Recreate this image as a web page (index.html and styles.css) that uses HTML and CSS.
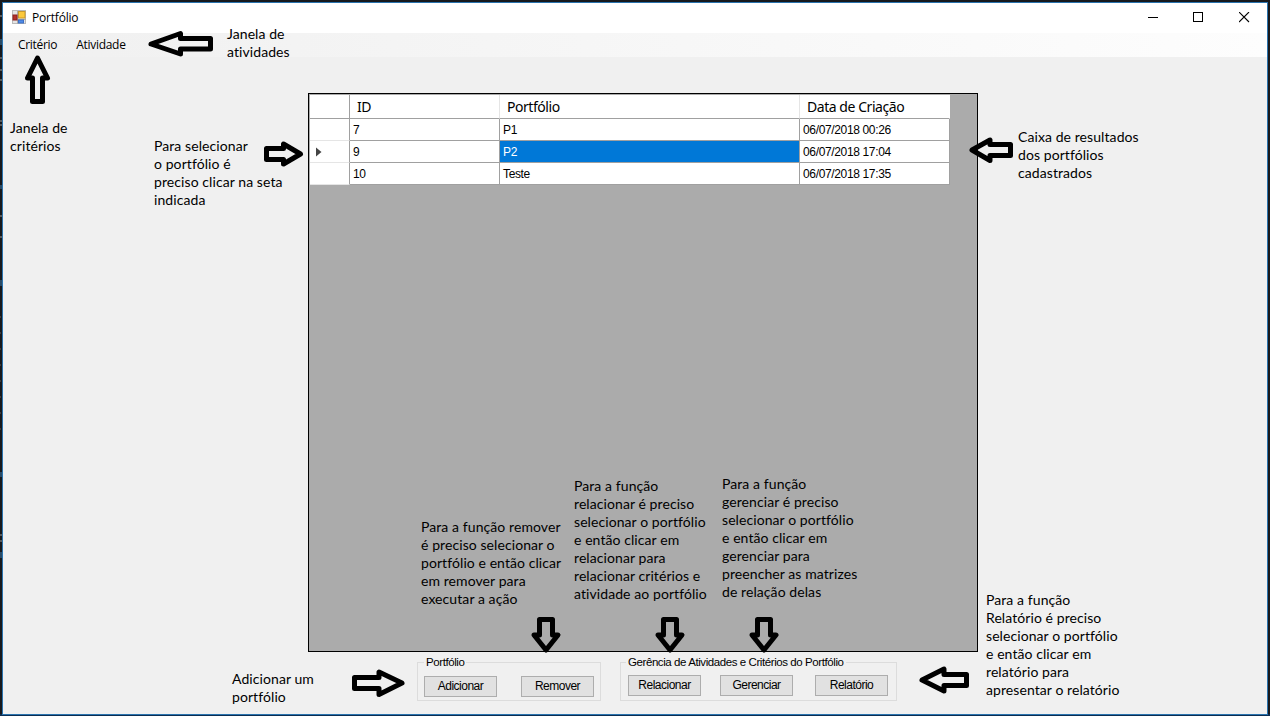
FILE: index.html
```html
<!DOCTYPE html>
<html lang="pt-BR">
<head>
<meta charset="utf-8">
<title>Portfólio</title>
<link rel="stylesheet" href="styles.css">
</head>
<body>
<div class="window">
  <header class="titlebar">
    <svg class="app-icon" width="15" height="15" viewBox="0 0 15 15">
      <rect x=".5" y=".5" width="13" height="13" fill="#e4e4e4" stroke="#b9b9b9"/>
      <path d="M5.500 1v13M1 9.500h13" stroke="#aaa"/>
      <rect x="1" y="5" width="4" height="5" fill="#b5312b" stroke="#8d2320"/>
      <rect x="6.500" y="1.500" width="6.500" height="6.500" fill="#fcc93c" stroke="#c9992b"/>
      <rect x="6.500" y="10" width="5" height="3" fill="#4f8be8" stroke="#3c6fc4"/>
    </svg>
    <h1 class="title">Portfólio</h1>
    <div class="controls">
      <svg width="11" height="11"><path d="M1 5.500h10" stroke="#000"/></svg>
      <svg width="11" height="11"><rect x=".5" y=".5" width="9" height="9" fill="none" stroke="#000"/></svg>
      <svg width="11" height="11"><path d="M0 0l10 10M10 0L0 10" stroke="#000" stroke-width="1.100"/></svg>
    </div>
  </header>
  <nav class="menubar"><span>Critério</span><span>Atividade</span></nav>
  <main class="content">
    <section class="grid-box">
      <div class="grid">
        <div class="th rowhead"></div><div class="th">ID</div><div class="th">Portfólio</div><div class="th last">Data de Criação</div>
        <div class="rowhead"></div><div class="td">7</div><div class="td">P1</div><div class="td">06/07/2018 00:26</div>
        <div class="rowhead"><svg width="6" height="10"><path d="M0 .5L5.500 5L0 9.500z" fill="#444"/></svg></div><div class="td">9</div><div class="td selected">P2</div><div class="td">06/07/2018 17:04</div>
        <div class="rowhead"></div><div class="td">10</div><div class="td">Teste</div><div class="td">06/07/2018 17:35</div>
      </div>
    </section>
    <div class="actions">
      <fieldset class="group group-portfolio">
        <legend>Portfólio</legend>
        <button>Adicionar</button><button>Remover</button>
      </fieldset>
      <fieldset class="group group-manage">
        <legend>Gerência de Atividades e Critérios do Portfólio</legend>
        <button>Relacionar</button><button>Gerenciar</button><button>Relatório</button>
      </fieldset>
    </div>
  </main>
</div>

<svg class="backdrop-marks" width="2" height="716" viewBox="0 0 2 716">
  <path d="M0 16h2M0 58h2M0 70h2M0 80h2M0 121h2M0 125h2M0 216h2M0 237h2M0 535h2M0 541h2" stroke="#9a9a9a"/>
  <path d="M1 39v6M1 185v4M1 280v6M1 472v5M1 552v6" stroke="#3f7fb0"/>
  <path d="M0 317h1M0 333h1M0 349h1M0 365h1M0 381h1M0 397h1M0 413h1M0 429h1" stroke="#66605c"/>
</svg>
<svg class="arrows" width="1270" height="716" viewBox="0 0 1270 716">
  <path d="M151 44L180.500 33.500V38.500H210.500V49H180.500V54Z"/>
  <path d="M37.500 58L47.500 78H42.500V101.500H32.500V78H27.500Z"/>
  <path d="M300.500 154L283.500 144V148.500H266.500V159.500H283.500V164Z"/>
  <path d="M972 150L990 140V144.500H1010.500V155.500H990V160.500Z"/>
  <path d="M402 683L379 672V677.500H354.500V688.500H379V694.500Z"/>
  <path d="M922 680L944 669V674.500H966.500V685.500H944V691Z"/>
  <path d="M546 650L558 635H552.500V619.500H539.500V635H534Z"/>
  <path d="M670 650L682 635H676.500V619.500H663.500V635H658Z"/>
  <path d="M764 650L776 635H770.500V619.500H757.500V635H752Z"/>
</svg>
<p class="note n-atividades">Janela de<br>atividades</p>
<p class="note n-criterios">Janela de<br>critérios</p>
<p class="note n-selecionar">Para selecionar<br>o portfólio é<br>preciso clicar na seta<br>indicada</p>
<p class="note n-caixa">Caixa de resultados<br>dos portfólios<br>cadastrados</p>
<p class="note n-remover">Para a função remover<br>é preciso selecionar o<br>portfólio e então clicar<br>em remover para<br>executar a ação</p>
<p class="note n-relacionar">Para a função<br>relacionar é preciso<br>selecionar o portfólio<br>e então clicar em<br>relacionar para<br>relacionar critérios e<br>atividade ao portfólio</p>
<p class="note n-gerenciar">Para a função<br>gerenciar é preciso<br>selecionar o portfólio<br>e então clicar em<br>gerenciar para<br>preencher as matrizes<br>de relação delas</p>
<p class="note n-relatorio">Para a função<br>Relatório é preciso<br>selecionar o portfólio<br>e então clicar em<br>relatório para<br>apresentar o relatório</p>
<p class="note n-adicionar">Adicionar um<br>portfólio</p>
</body>
</html>
```

FILE: styles.css
```css
* { box-sizing: border-box; }
body {
  margin: 0;
  width: 1270px;
  height: 716px;
  padding: 2px 2px 1px;
  overflow: hidden;
  position: relative;
  background: linear-gradient(#17191d 714px, #0b2d52 714px);
  color: #000;
  font-family: "Liberation Sans", sans-serif;
}
.window {
  width: 1266px;
  height: 713px;
  border: 1px solid #2a73ae;
  background: #f0f0f0;
  display: flex;
  flex-direction: column;
}
.titlebar {
  height: 30px;
  background: #fff;
  display: flex;
  align-items: center;
  padding: 0 17px 0 9px;
}
.app-icon { margin-top: -1px; }
.title {
  margin: 0 0 0 5px;
  font: 12px/16px "Open Sans", sans-serif;
  letter-spacing: -0.2px;
}
.controls { margin: -1px 0 0 auto; display: flex; gap: 35px; }
.menubar {
  height: 24px;
  display: flex;
  align-items: center;
  padding-left: 15px;
  gap: 19px;
  background: linear-gradient(90deg, #f0f0f0, #fdfdfd);
  font: 12px/16px "Open Sans", sans-serif;
  letter-spacing: -0.3px;
}
.content { padding: 36px 0 0 305px; }
.grid-box {
  width: 670px;
  height: 559px;
  border: 1px solid #000;
  padding: 1px 0 0 1px;
  background: #ababab;
}
.grid {
  width: 640px;
  display: grid;
  grid-template-columns: 40px 150px 300px 150px;
  grid-template-rows: 24px 22px 22px 22px;
}
.th, .td, .rowhead {
  background: #fff;
  border-right: 1px solid #a0a0a0;
  border-bottom: 1px solid #a0a0a0;
  white-space: nowrap;
}
.th {
  padding-left: 7px;
  font: 14px/23px "Noto Sans", sans-serif;
  letter-spacing: -0.45px;
  border-right-color: #e5e5e5;
}
.th.last { border-right-color: #fff; }
.rowhead { border-bottom-color: #e5e5e5; padding: 6px 0 0 6px; }
.rowhead svg { display: block; }
.th.rowhead { border-color: #a0a0a0; }
.td { padding-left: 3px; font-size: 12px; line-height: 22px; letter-spacing: -0.35px; }
.selected { background: #0078d7; color: #fff; }
.actions { display: flex; align-items: flex-start; gap: 19px; padding: 4px 0 0 109px; }
.group {
  margin: 0;
  padding: 8px 6px 0;
  height: 45px;
  min-width: 0;
  border: 1px solid #dcdcdc;
  display: flex;
  align-items: flex-start;
}
.group legend { padding: 0 2px; height: 12px; font-size: 11.5px; line-height: 12px; white-space: nowrap; letter-spacing: -0.42px; }
.group-portfolio { width: 184px; gap: 24px; }
.group-manage { width: 277px; padding: 7px 7px 0; gap: 19px; }
.group-manage legend { margin-left: -2px; }
.group-manage button:last-child { margin-left: 3px; }
.group button {
  width: 73px;
  height: 21px;
  flex: none;
  padding: 0;
  border: 1px solid #adadad;
  background: #e1e1e1;
  font: 12px/19px "Liberation Sans", sans-serif;
  letter-spacing: -0.5px;
}
.backdrop-marks, .arrows { position: absolute; left: 0; top: 0; }
.arrows path { fill: none; stroke: #000; stroke-width: 5; stroke-linejoin: round; }
.note {
  position: absolute;
  margin: 0;
  font: 14px/18px Lato, sans-serif;
  font-variant-ligatures: none;
  letter-spacing: 0.08px;
  white-space: nowrap;
}
.n-atividades { left: 227px; top: 25px; }
.n-criterios { left: 10px; top: 119px; }
.n-selecionar { left: 154px; top: 137px; }
.n-caixa { left: 1018px; top: 128px; }
.n-remover { left: 421px; top: 518px; }
.n-relacionar { left: 574px; top: 477px; }
.n-gerenciar { left: 722px; top: 475px; }
.n-relatorio { left: 986px; top: 591px; }
.n-adicionar { left: 232px; top: 670px; }
```
